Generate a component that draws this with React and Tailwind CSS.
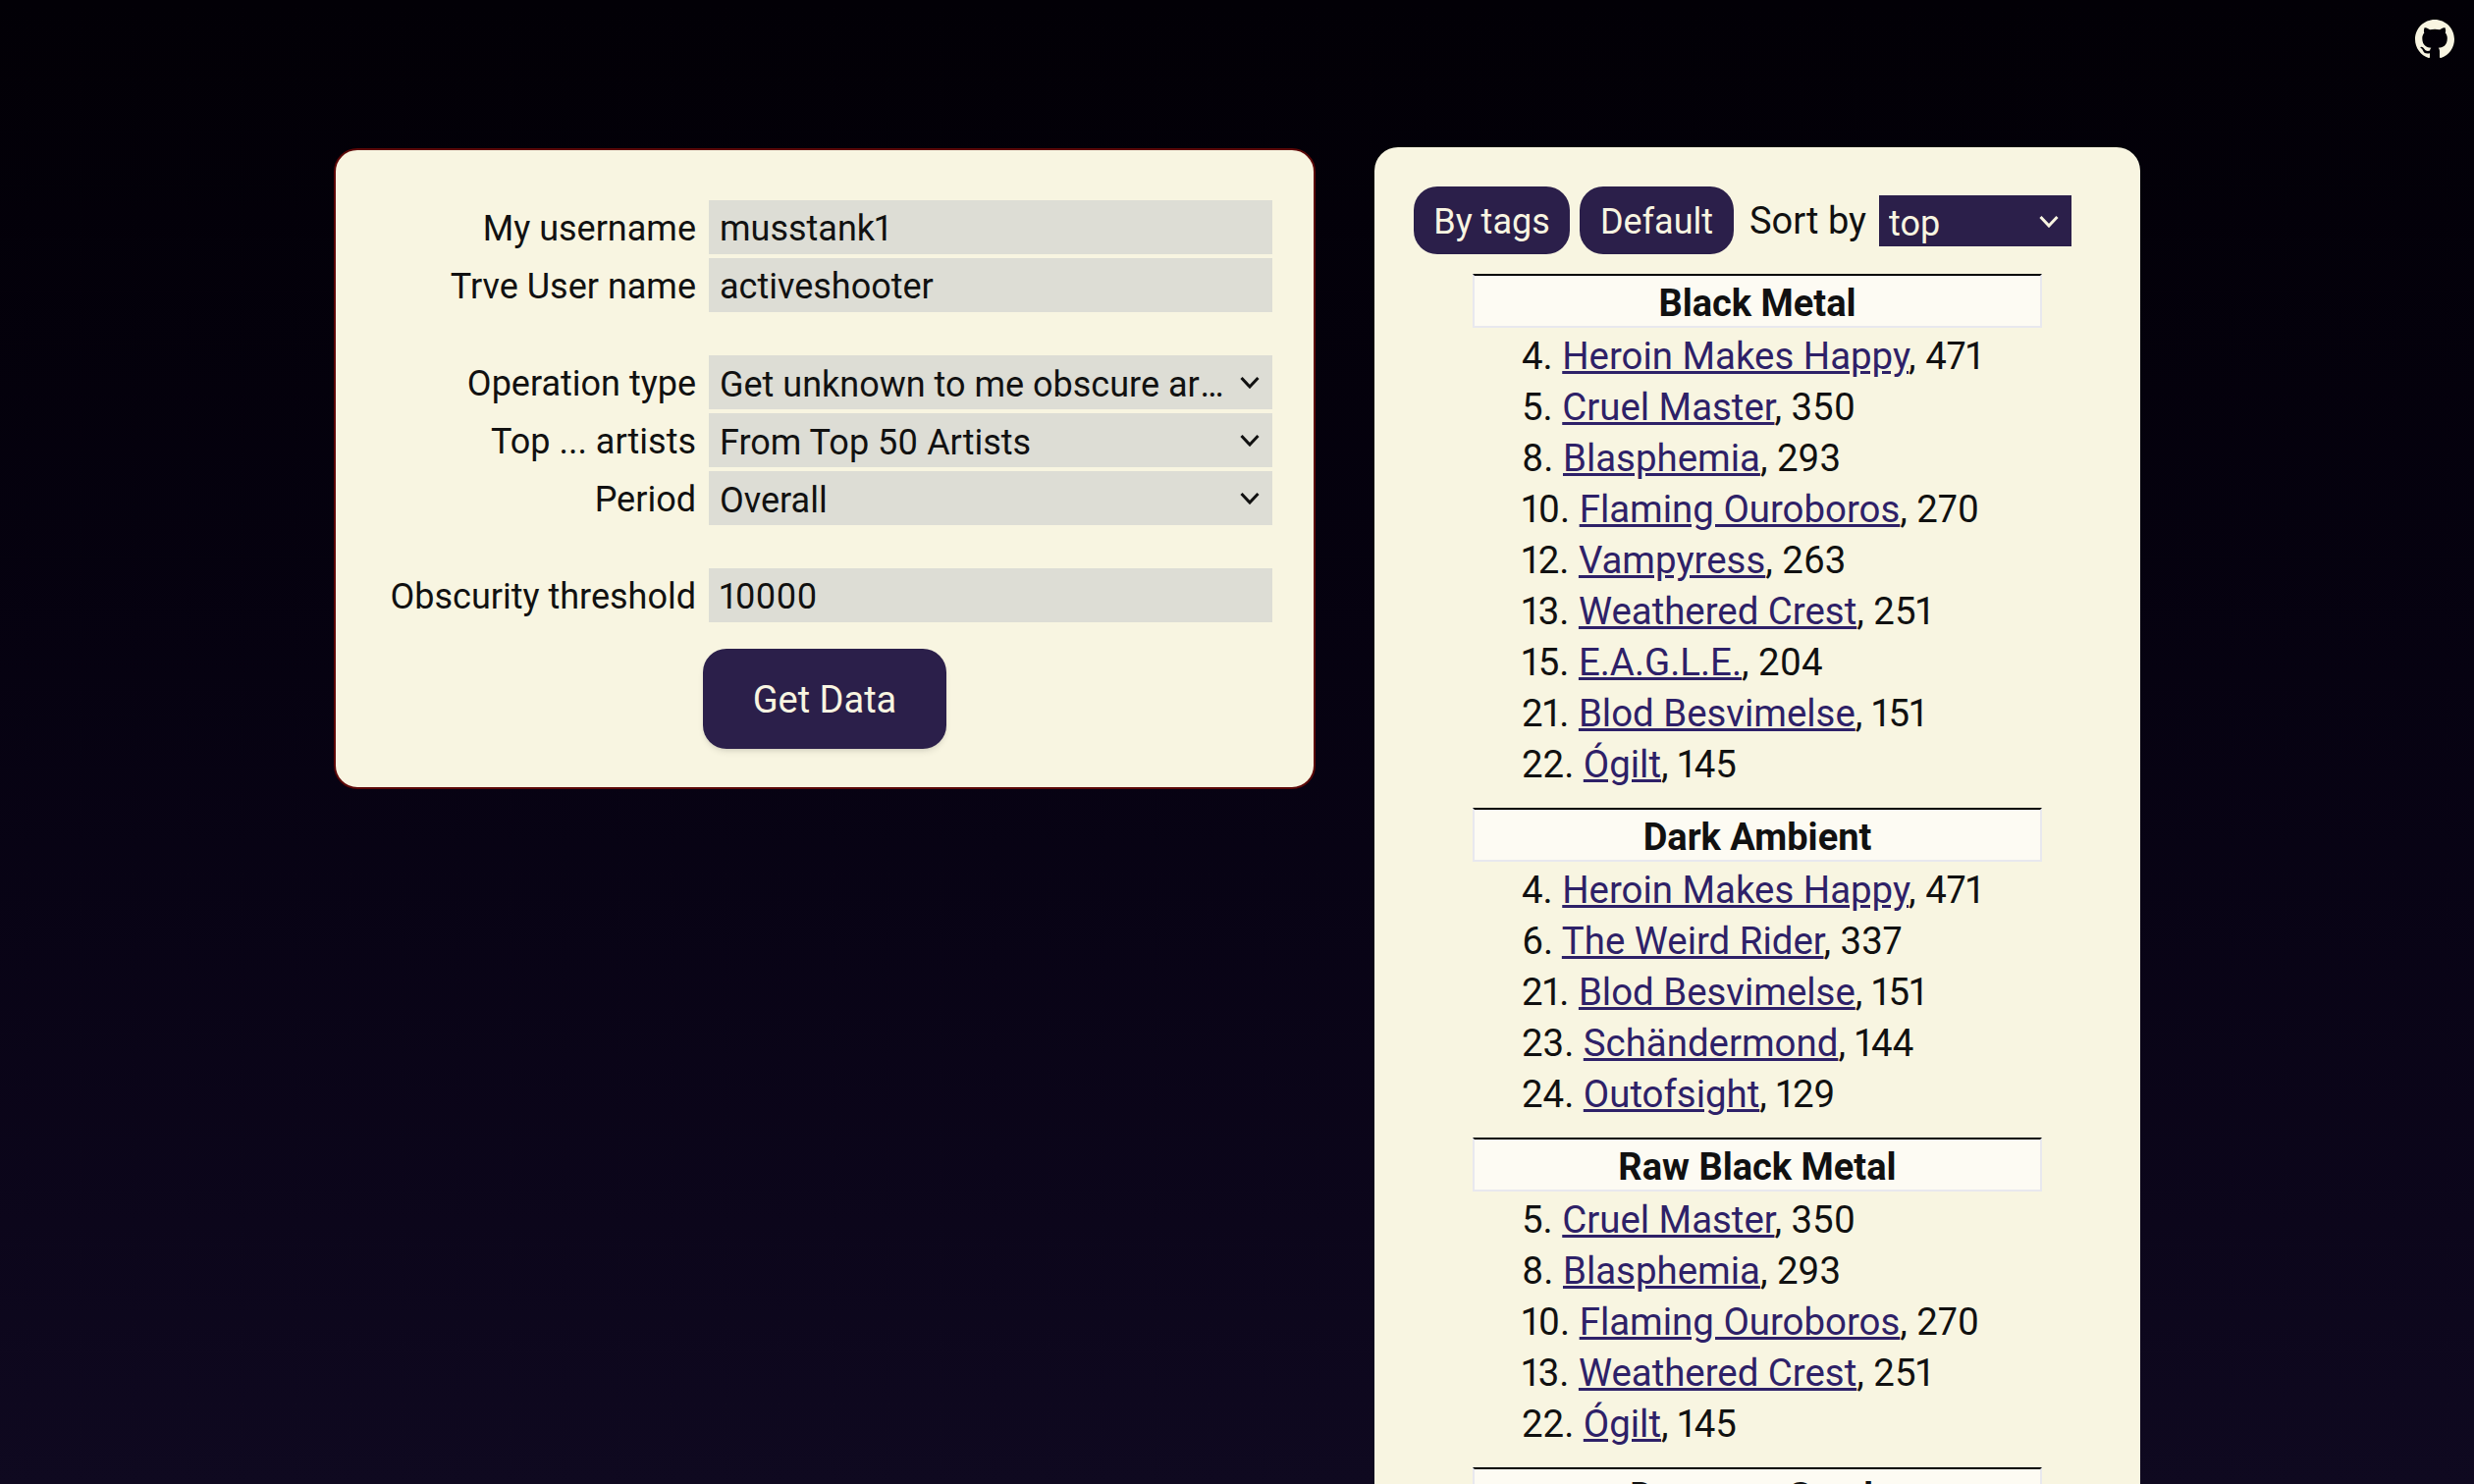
import React from 'react';

const sections = [
  {
    title: 'Black Metal',
    items: [
      [4, 'Heroin Makes Happy', 471],
      [5, 'Cruel Master', 350],
      [8, 'Blasphemia', 293],
      [10, 'Flaming Ouroboros', 270],
      [12, 'Vampyress', 263],
      [13, 'Weathered Crest', 251],
      [15, 'E.A.G.L.E.', 204],
      [21, 'Blod Besvimelse', 151],
      [22, 'Ógilt', 145],
    ],
  },
  {
    title: 'Dark Ambient',
    items: [
      [4, 'Heroin Makes Happy', 471],
      [6, 'The Weird Rider', 337],
      [21, 'Blod Besvimelse', 151],
      [23, 'Schändermond', 144],
      [24, 'Outofsight', 129],
    ],
  },
  {
    title: 'Raw Black Metal',
    items: [
      [5, 'Cruel Master', 350],
      [8, 'Blasphemia', 293],
      [10, 'Flaming Ouroboros', 270],
      [13, 'Weathered Crest', 251],
      [22, 'Ógilt', 145],
    ],
  },
  { title: 'Dungeon Synth', items: [] },
];

const inputClass = 'w-[574px] h-[55px] bg-[#ddddd5] pl-[11px] pr-[10px] pt-[3px] text-[36px] text-[#111] outline-none proportional-nums';
const selectClass = 'block w-[574px] h-[55px] bg-[#ddddd5] pl-[11px] pr-[46px] pt-[3px] text-[36px] text-[#111] outline-none appearance-none text-ellipsis overflow-hidden whitespace-nowrap proportional-nums';

const Row = ({ label, children }) => (
  <div className="flex items-center justify-end gap-[13px]">
    <span className="text-[36px] leading-[44px] text-[#111] pt-[3px]">{label}</span>
    {children}
  </div>
);

const Chevron = ({ className }) => (
  <svg viewBox="0 0 20 13" fill="none" strokeWidth="3" className={className}>
    <polyline points="1.5,2 10,11 18.5,2" />
  </svg>
);

const Dropdown = ({ children }) => (
  <div className="relative">
    <select className={selectClass}>{children}</select>
    <Chevron className="absolute right-[13px] top-[21px] w-[20px] h-[13px] stroke-[#111] pointer-events-none" />
  </div>
);

const GithubMark = () => (
  <svg viewBox="0 0 16 16" className="w-[40px] h-[40px] fill-[#f8f5e1]">
    <path d="M8 0C3.58 0 0 3.58 0 8c0 3.54 2.29 6.53 5.47 7.59.4.07.55-.17.55-.38 0-.19-.01-.82-.01-1.49-2.01.37-2.53-.49-2.69-.94-.09-.23-.48-.94-.82-1.13-.28-.15-.68-.52-.01-.53.63-.01 1.08.58 1.23.82.72 1.21 1.87.87 2.33.66.07-.52.28-.87.51-1.07-1.78-.2-3.64-.89-3.64-3.95 0-.87.31-1.59.82-2.15-.08-.2-.36-1.02.08-2.12 0 0 .67-.21 2.2.82.64-.18 1.32-.27 2-.27s1.36.09 2 .27c1.53-1.04 2.2-.82 2.2-.82.44 1.1.16 1.92.08 2.12.51.56.82 1.27.82 2.15 0 3.07-1.87 3.75-3.65 3.95.29.25.54.73.54 1.48 0 1.07-.01 1.93-.01 2.2 0 .21.15.46.55.38A8.01 8.01 0 0 0 16 8c0-4.42-3.58-8-8-8z" />
  </svg>
);

export default function App() {
  return (
    <div className="h-[1512px] overflow-hidden bg-gradient-to-b from-[#020006] to-[#0f0920] font-['Roboto',sans-serif] proportional-nums">
      <div className="flex justify-end h-[150px] pt-[20px] pr-[20px]">
        <GithubMark />
      </div>
      <div className="flex items-start pl-[340px] gap-[60px]">
        {/* Form card */}
        <div className="mt-[1px] w-[1000px] h-[653px] bg-[#f8f5e1] border-2 border-[#5c0808] rounded-[24px] pl-[24px] pr-[42px] pt-[51px]">
          <div className="flex flex-col gap-[4px]">
            <Row label="My username">
              <input className={inputClass} defaultValue="musstank1" />
            </Row>
            <Row label="Trve User name">
              <input className={inputClass} defaultValue="activeshooter" />
            </Row>
          </div>
          <div className="flex flex-col gap-[4px] mt-[44px]">
            <Row label="Operation type">
              <Dropdown>
                <option>Get unknown to me obscure artists from Trve User</option>
              </Dropdown>
            </Row>
            <Row label="Top ... artists">
              <Dropdown>
                <option>From Top 50 Artists</option>
              </Dropdown>
            </Row>
            <Row label="Period">
              <Dropdown>
                <option>Overall</option>
              </Dropdown>
            </Row>
          </div>
          <div className="mt-[44px]">
            <Row label="Obscurity threshold">
              <input className={inputClass} defaultValue="10000" />
            </Row>
          </div>
          <div className="flex justify-center mt-[27px] pl-[18px]">
            <button className="w-[248px] h-[102px] bg-[#2b1f4a] text-[#f8f5e1] text-[38px] pt-[3px] rounded-[24px] shadow-md">
              Get Data
            </button>
          </div>
        </div>

        {/* Results card */}
        <div className="w-[780px] bg-[#f8f5e1] rounded-[24px] pt-[40px] pl-[40px] pr-[40px] text-[#111]">
          <div className="flex items-center h-[69px] gap-[10px]">
            <button className="h-[69px] w-[159px] bg-[#2b1f4a] text-[#f8f5e1] text-[36px] pt-[3px] rounded-[24px]">By tags</button>
            <button className="h-[69px] w-[157px] bg-[#2b1f4a] text-[#f8f5e1] text-[36px] pt-[3px] rounded-[24px]">Default</button>
            <span className="text-[38px] ml-[6px] pt-[2px]">Sort by</span>
            <div className="relative ml-[3px]">
              <select className="block h-[52px] w-[196px] bg-[#2b1f4a] text-[#f8f5e1] text-[36px] pl-[10px] pt-[2px] outline-none appearance-none">
                <option>top</option>
              </select>
              <Chevron className="absolute right-[13px] top-[20px] w-[20px] h-[13px] stroke-[#f8f5e1] pointer-events-none" />
            </div>
          </div>
          <div className="mt-[20px] ml-[60px] w-[580px]">
            {sections.map((section) => (
              <div key={section.title} className="pb-[21px]">
                <div className="h-[55px] flex items-center justify-center bg-[#fdfbf3] border-2 border-[#e8e8ee] border-t-black pt-[5px] text-[38px] font-bold">
                  {section.title}
                </div>
                <div className="pl-[50px]">
                  {section.items.map(([rank, name, count]) => (
                    <div key={name} className="h-[52px] leading-[58px] text-[38.4px]">
                      {rank}. <a href="#" className="text-[#2e2168] underline">{name}</a>, {count}
                    </div>
                  ))}
                </div>
              </div>
            ))}
          </div>
        </div>
      </div>
    </div>
  );
}
